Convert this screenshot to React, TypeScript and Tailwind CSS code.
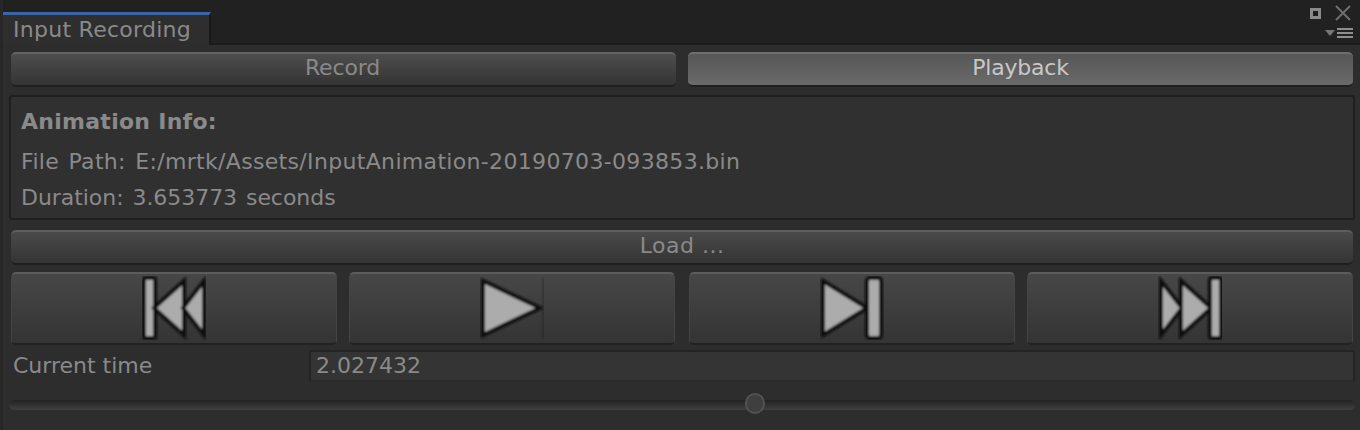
const fontFamily = "font-['DejaVu_Sans',sans-serif]";

const Glyph = ({ children, id }: { children: React.ReactNode; id: string }) => (
  <svg width="64" height="64" viewBox="0 0 64 64" fill="#acacac" stroke="#101010" strokeWidth="4" strokeLinejoin="miter" className="mb-[1px]">
    <defs>
      <filter id={id} x="-5%" y="-5%" width="110%" height="110%">
        <feGaussianBlur stdDeviation="0.9" />
      </filter>
    </defs>
    <g filter={`url(#${id})`}>{children}</g>
  </svg>
);

const TransportButton = ({ children, className = "" }: { children: React.ReactNode; className?: string }) => (
  <button className={`w-[326px] h-[73px] flex items-center justify-center rounded-[5px] border border-[#454545] border-t-2 border-t-[#5c5c5c] border-b-2 border-b-[#222222] bg-gradient-to-b from-[#474747] to-[#343434] ${className}`}>
    {children}
  </button>
);

const App = () => {
  return (
    <div className={`${fontFamily} w-[1360px] h-[430px] overflow-hidden border-l-[3px] border-l-[#272727] bg-[#2d2d2d] text-[#8a8a8a] text-[22px] leading-none`}>
      {/* TAB BAR */}
      <div className="h-[45px] bg-[#212121] flex justify-between border-b-2 border-b-[#1c1c1c]">
        <div className="mt-[12px] w-[208px] h-[33px] pl-[10px] flex items-center bg-[#2e2e2e] border-t-[3px] border-t-[#3a66a8] border-r-2 border-r-[#191919] tracking-[0.27px]">
          Input Recording
        </div>
        <div className="w-[50px] mr-[7px] pt-[5px] flex flex-col items-end">
          <div className="flex items-center gap-[14px] mr-[2px]">
            <div className="w-[11px] h-[11px] border-[3px] border-[#8a8a8a] bg-[#1d1d1d]" />
            <svg width="16" height="16" viewBox="0 0 16 16" stroke="#6e6e6e" strokeWidth="2">
              <path d="M1 1L15 15M15 1L1 15" />
            </svg>
          </div>
          <div className="mt-[7px] flex items-center gap-[2px]">
            <svg width="10" height="6" viewBox="0 0 10 6" fill="#777777">
              <path d="M0 0H10L5 6Z" />
            </svg>
            <div className="w-[16px] flex flex-col gap-[2px]">
              <div className="h-[2px] bg-[#8e8e8e]" />
              <div className="h-[2px] bg-[#8e8e8e]" />
              <div className="h-[2px] bg-[#8e8e8e]" />
            </div>
          </div>
        </div>
      </div>
      {/* CONTENT */}
      <div className="pl-[8px] pr-[7px] pt-[7px]">
        <div className="flex gap-[12px]">
          <button className="w-[665px] h-[35px] pb-[4px] pr-[2px] rounded-[5px] border-t-2 border-t-[#636363] border-b-2 border-b-[#1f1f1f] bg-gradient-to-b from-[#4d4d4d] to-[#343434] tracking-[-0.15px]">
            Record
          </button>
          <button className="w-[665px] h-[35px] pb-[4px] rounded-[5px] border-t-2 border-t-[#6f6f6f] border-b-2 border-b-[#1f1f1f] bg-gradient-to-b from-[#575757] to-[#6a6a6a] text-[#c8c8c8] tracking-[-0.2px]">
            Playback
          </button>
        </div>
        {/* ANIMATION INFO */}
        <div className="ml-[-2px] mr-[-2px] mt-[8px] h-[125px] pl-[10px] pt-[14px] rounded-[3px] border-2 border-[#1f1f1f] bg-[#303030]">
          <p className="font-bold tracking-[0.27px]">Animation Info:</p>
          <p className="mt-[18px] tracking-[0.33px] [word-spacing:2px]">File Path: E:/mrtk/Assets/InputAnimation-20190703-093853.bin</p>
          <p className="mt-[14px] tracking-[-0.05px] [word-spacing:2px]">Duration: 3.653773 seconds</p>
        </div>
        <button className="mt-[10px] pb-[4px] w-full h-[35px] rounded-[5px] border-t-2 border-t-[#5e5e5e] border-b-2 border-b-[#1f1f1f] bg-gradient-to-b from-[#4a4a4a] to-[#343434] tracking-[0.5px]">
          Load ...
        </button>
        {/* TRANSPORT */}
        <div className="mt-[7px] flex gap-[12px]">
          <TransportButton>
            <Glyph id="blur-first">
              <rect x="2" y="2" width="11" height="60" rx="2" />
              <path d="M42 5V59L12 32Z" />
              <path d="M62 5V59L41 32Z" />
            </Glyph>
          </TransportButton>
          <TransportButton>
            <Glyph id="blur-play">
              <path d="M3 5V59L60 32Z" />
              <path d="M63.5 2V64" strokeWidth="1" stroke="#222222" />
            </Glyph>
          </TransportButton>
          <TransportButton className="ml-[2px]">
            <Glyph id="blur-step">
              <path d="M3 5V59L47 32Z" />
              <rect x="47" y="2" width="14" height="60" rx="3" />
            </Glyph>
          </TransportButton>
          <TransportButton>
            <Glyph id="blur-last">
              <path d="M3 5V59L24 32Z" />
              <path d="M23 5V59L53 32Z" />
              <rect x="52" y="2" width="11" height="60" rx="2" />
            </Glyph>
          </TransportButton>
        </div>
        {/* CURRENT TIME */}
        <div className="mt-[5px] ml-[-8px] mr-[-2px] flex items-center h-[32px]">
          <span className="w-[306px] pl-[10px]">Current time</span>
          <div className="flex-1 h-full pl-[5px] flex items-center border-2 border-[#242424] border-b-[#2a2a2a] bg-[#343434]">
            2.027432
          </div>
        </div>
        {/* SLIDER */}
        <div className="ml-[-2px] mr-[-2px] mt-[18px] relative h-[10px] rounded-full bg-gradient-to-b from-[#232323] to-[#404040]">
          <div className="absolute left-[736px] top-[-7px] w-[20px] h-[21px] rounded-full border-2 border-[#525252] bg-[#3f3f3f]" />
        </div>
      </div>
    </div>
  );
};

export default App;
